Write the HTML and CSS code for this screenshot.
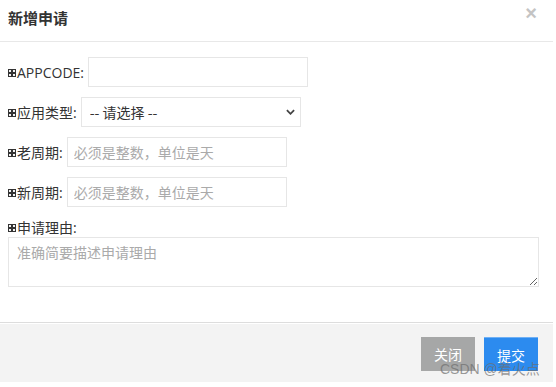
FILE: index.html
```html
<!DOCTYPE html>
<html lang="zh-CN">
<head>
    <meta charset="UTF-8">
    <meta name="viewport" content="width=device-width, initial-scale=1.0">
    <title>新增申请</title>
    <link rel="stylesheet" href="styles.css">
</head>
<body>
    <div class="dialog">
        <div class="dialog-header">
            <span class="dialog-title">新增申请</span>
            <span class="dialog-close">&times;</span>
        </div>

        <div class="dialog-body">
            <div class="form-row">
                <label class="form-label"><svg class="ico" viewBox="0 0 8 10"><path d="M0.5 1.5h3v3h-3zM4.5 1.5h3v3h-3zM0.5 5.5h3v3h-3zM4.5 5.5h3v3h-3z"/></svg>APPCODE:</label>
                <input class="form-input" type="text">
            </div>
            <div class="form-row">
                <label class="form-label"><svg class="ico" viewBox="0 0 8 10"><path d="M0.5 1.5h3v3h-3zM4.5 1.5h3v3h-3zM0.5 5.5h3v3h-3zM4.5 5.5h3v3h-3z"/></svg>应用类型:</label>
                <div class="select-wrap">
                    <select class="form-select">
                        <option>-- 请选择 --</option>
                    </select>
                    <svg class="select-arrow" viewBox="0 0 10 6"><path d="M1 1l4 4 4-4"/></svg>
                </div>
            </div>
            <div class="form-row">
                <label class="form-label"><svg class="ico" viewBox="0 0 8 10"><path d="M0.5 1.5h3v3h-3zM4.5 1.5h3v3h-3zM0.5 5.5h3v3h-3zM4.5 5.5h3v3h-3z"/></svg>老周期:</label>
                <input class="form-input" type="text" placeholder="必须是整数，单位是天">
            </div>
            <div class="form-row">
                <label class="form-label"><svg class="ico" viewBox="0 0 8 10"><path d="M0.5 1.5h3v3h-3zM4.5 1.5h3v3h-3zM0.5 5.5h3v3h-3zM4.5 5.5h3v3h-3z"/></svg>新周期:</label>
                <input class="form-input" type="text" placeholder="必须是整数，单位是天">
            </div>
            <div class="form-block">
                <label class="form-label"><svg class="ico" viewBox="0 0 8 10"><path d="M0.5 1.5h3v3h-3zM4.5 1.5h3v3h-3zM0.5 5.5h3v3h-3zM4.5 5.5h3v3h-3z"/></svg>申请理由:</label>
                <textarea class="form-textarea" placeholder="准确简要描述申请理由"></textarea>
            </div>
        </div>

        <div class="dialog-footer">
            <button class="btn btn-gray">关闭</button>
            <button class="btn btn-blue">提交</button>
        </div>
    </div>

    <div class="watermark">CSDN @着火点</div>
</body>
</html>
```

FILE: styles.css
```css
body {
    margin: 0;
    background: #fff;
    font-family: "Open Sans", "Noto Sans CJK SC", sans-serif;
    font-size: 14px;
    color: #333;
    position: relative;
    width: 556px;
    height: 387px;
    overflow: hidden;
}
.dialog {
    width: 553px;
    background: #fff;
}
.dialog-header {
    height: 41px;
    border-bottom: 1px solid #e8e8e8;
    display: flex;
    align-items: center;
    justify-content: space-between;
    padding: 0 16px 0 8px;
}
.dialog-title {
    font-family: "Noto Sans CJK SC", sans-serif;
    font-size: 15px;
    font-weight: bold;
    color: #333;
    margin-top: -6px;
}
.dialog-close {
    font-family: "Liberation Sans", sans-serif;
    font-size: 20px;
    font-weight: bold;
    color: #c4c4c4;
    margin-top: -14px;
}
.dialog-body {
    padding: 15px 14px 35px 8px;
}
.form-row {
    display: flex;
    align-items: center;
    gap: 4px;
    margin-bottom: 10px;
}
.form-label {
    display: flex;
    align-items: center;
    font-family: "Open Sans", "Noto Sans CJK SC", sans-serif;
    font-size: 14px;
    color: #333;
    line-height: 18px;
    padding-top: 2px;
}
.ico {
    width: 8px;
    height: 10px;
    margin-right: 1px;
    fill: none;
    stroke: #333;
    stroke-width: 1.1;
}
.form-input {
    box-sizing: border-box;
    width: 220px;
    height: 30px;
    border: 1px solid #e6e6e6;
    padding: 0 6px;
    font-family: "Noto Sans CJK SC", sans-serif;
    font-size: 14px;
    color: #333;
    outline: none;
}
.form-input::placeholder,
.form-textarea::placeholder {
    color: #aaa;
}
.select-wrap {
    position: relative;
}
.form-select {
    box-sizing: border-box;
    width: 220px;
    height: 30px;
    border: 1px solid #e6e6e6;
    background: #fff;
    padding: 0 8px;
    font-family: "Noto Sans CJK SC", sans-serif;
    font-size: 14px;
    color: #333;
    appearance: none;
    -webkit-appearance: none;
    outline: none;
}
.select-arrow {
    position: absolute;
    right: 6px;
    top: 12px;
    width: 9px;
    height: 6px;
    fill: none;
    stroke: #444;
    stroke-width: 2;
}
.form-textarea {
    display: block;
    box-sizing: border-box;
    width: 531px;
    height: 50px;
    border: 1px solid #e6e6e6;
    padding: 4px 8px;
    font-family: "Noto Sans CJK SC", sans-serif;
    font-size: 14px;
    color: #333;
    outline: none;
    resize: vertical;
}
.dialog-footer {
    border-top: 1px solid #ddd;
    box-shadow: inset 0 1px 0 #fff;
    background: #f3f3f3;
    height: 60px;
    box-sizing: border-box;
    padding: 14px 15px 0 0;
    display: flex;
    justify-content: flex-end;
    gap: 9px;
}
.btn {
    width: 54px;
    height: 34px;
    border: none;
    color: #fff;
    font-family: "Noto Sans CJK SC", sans-serif;
    font-size: 14px;
    cursor: pointer;
    padding: 0;
}
.btn-gray {
    background: #a6a7a7;
}
.btn-blue {
    background: #2c8bef;
    border-top: 1px solid #6fb0f5;
}
.watermark {
    position: absolute;
    left: 440px;
    top: 358px;
    font-family: "Liberation Sans", "Noto Sans CJK SC", sans-serif;
    font-size: 14px;
    color: rgba(110, 110, 110, 0.7);
    white-space: nowrap;
}
```
